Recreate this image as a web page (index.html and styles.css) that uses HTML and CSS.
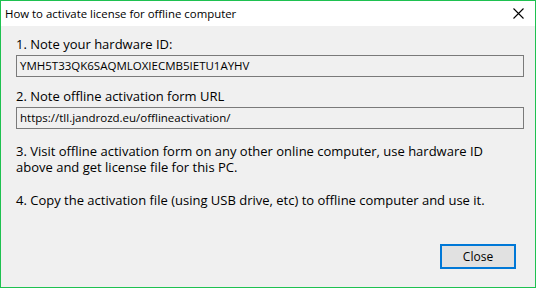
FILE: index.html
```html
<!DOCTYPE html>
<html>
<head>
<meta charset="utf-8">
<link rel="stylesheet" href="styles.css">
</head>
<body>
<div class="window">
  <div class="titlebar">
    <span class="title">How to activate license for offline computer</span>
    <svg class="close-x" width="11" height="11" viewBox="0 0 11 11"><path d="M0.5 0.5 L10.5 10.5 M10.5 0.5 L0.5 10.5" stroke="#000" stroke-width="1.1" fill="none"/></svg>
  </div>
  <div class="content">
    <div class="label">1. Note your hardware ID:</div>
    <div class="field">YMH5T33QK6SAQMLOXIECMB5IETU1AYHV</div>
    <div class="label second">2. Note offline activation form URL</div>
    <div class="field">https://tll.jandrozd.eu/offlineactivation/</div>
    <p class="para">3. Visit offline activation form on any other online computer, use hardware ID<br>above and get license file for this PC.</p>
    <p class="para p4">4. Copy the activation file (using USB drive, etc) to offline computer and use it.</p>
    <div class="buttons"><button class="btn">Close</button></div>
  </div>
</div>
</body>
</html>
```
FILE: styles.css
```css
html, body {
  margin: 0;
  padding: 0;
  background: #f0f0f0;
}
.window {
  width: 536px;
  height: 288px;
  box-sizing: border-box;
  border: 1px solid #1ec150;
  display: flex;
  flex-direction: column;
  font-family: "Open Sans", "Noto Sans", sans-serif;
  color: #000;
}
.titlebar {
  height: 25px;
  background: #fff;
  display: flex;
  align-items: center;
  justify-content: space-between;
  padding: 0 11px 0 4px;
}
.title {
  font-size: 11.4px;
  line-height: 16px;
}
.close-x {
  display: block;
}
.content {
  flex: 1;
  background: #f0f0f0;
  padding: 10px 11px 0 15px;
  display: flex;
  flex-direction: column;
}
.label {
  font-size: 13px;
  line-height: 17px;
  margin-bottom: 2px;
}
.label.second {
  margin-top: 11px;
}
.field {
  height: 22px;
  box-sizing: border-box;
  border: 1px solid #7a7a7a;
  padding: 0 3px;
  font-size: 11.5px;
  line-height: 20px;
  white-space: nowrap;
}
.para {
  margin: 14px 0 0;
  font-size: 13px;
  line-height: 16px;
}
.para.p4 {
  margin-top: 17px;
}
.buttons {
  display: flex;
  justify-content: flex-end;
  margin-top: 36px;
  padding-right: 8px;
}
.btn {
  width: 76px;
  height: 25px;
  box-sizing: border-box;
  border: 2px solid #0078d7;
  background: #e1e1e1;
  font-family: "Open Sans", "Noto Sans", sans-serif;
  font-size: 12px;
  color: #000;
  padding: 0;
  border-radius: 0;
}
```
